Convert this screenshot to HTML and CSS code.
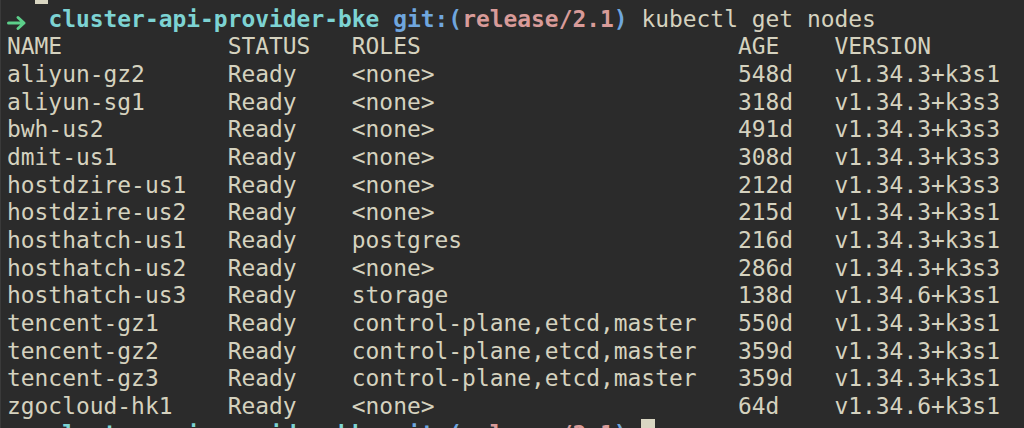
FILE: index.html
```html
<!DOCTYPE html>
<html lang="en">
<head>
<meta charset="utf-8">
<title>Terminal</title>
<link rel="stylesheet" href="styles.css">
</head>
<body>
<div class="term">
<div class="line">  <span class="cursor"> </span></div>
<div class="line"><span class="arrow"><svg viewBox="0 0 20 14" width="20" height="14"><path d="M1.5 7H17M11 1.5L17 7L11 12.5" fill="none" stroke="#5ccf8a" stroke-width="3" stroke-linecap="round" stroke-linejoin="round"/></svg></span>  <span class="dir">cluster-api-provider-bke</span> <span class="git">git:(</span><span class="branch">release/2.1</span><span class="git">)</span> kubectl get nodes</div>
<div class="line">NAME            STATUS   ROLES                       AGE    VERSION</div>
<div class="line">aliyun-gz2      Ready    &lt;none&gt;                      548d   v1.34.3+k3s1</div>
<div class="line">aliyun-sg1      Ready    &lt;none&gt;                      318d   v1.34.3+k3s3</div>
<div class="line">bwh-us2         Ready    &lt;none&gt;                      491d   v1.34.3+k3s3</div>
<div class="line">dmit-us1        Ready    &lt;none&gt;                      308d   v1.34.3+k3s3</div>
<div class="line">hostdzire-us1   Ready    &lt;none&gt;                      212d   v1.34.3+k3s3</div>
<div class="line">hostdzire-us2   Ready    &lt;none&gt;                      215d   v1.34.3+k3s1</div>
<div class="line">hosthatch-us1   Ready    postgres                    216d   v1.34.3+k3s1</div>
<div class="line">hosthatch-us2   Ready    &lt;none&gt;                      286d   v1.34.3+k3s3</div>
<div class="line">hosthatch-us3   Ready    storage                     138d   v1.34.6+k3s1</div>
<div class="line">tencent-gz1     Ready    control-plane,etcd,master   550d   v1.34.3+k3s1</div>
<div class="line">tencent-gz2     Ready    control-plane,etcd,master   359d   v1.34.3+k3s1</div>
<div class="line">tencent-gz3     Ready    control-plane,etcd,master   359d   v1.34.3+k3s1</div>
<div class="line">zgocloud-hk1    Ready    &lt;none&gt;                      64d    v1.34.6+k3s1</div>
<div class="line"><span class="arrow"><svg viewBox="0 0 20 14" width="20" height="14"><path d="M1.5 7H17M11 1.5L17 7L11 12.5" fill="none" stroke="#5ccf8a" stroke-width="3" stroke-linecap="round" stroke-linejoin="round"/></svg></span>  <span class="dir">cluster-api-provider-bke</span> <span class="git">git:(</span><span class="branch">release/2.1</span><span class="git">)</span> <span class="cursor"> </span></div>
</div>
</body>
</html>
```

FILE: styles.css
```css
html, body {
  margin: 0;
  padding: 0;
  height: 428px;
  overflow: hidden;
  background: #2b2b2b;
}

body {
  border-left: 1px solid #3a3a3a;
  box-sizing: border-box;
}

.term {
  margin: -22.2px 0 0 6px;
  font-family: "DejaVu Sans Mono", "Liberation Mono", monospace;
  font-size: 22.92px;
  line-height: 27.7px;
  color: #d5d2bf;
}

.line {
  white-space: pre;
  height: 27.7px;
}

.arrow {
  display: inline-block;
  width: 1ch;
  height: 27.7px;
  vertical-align: top;
  overflow: visible;
}

.arrow svg {
  display: block;
  margin-top: 10px;
  overflow: visible;
}

.dir {
  color: #7dd3d3;
  font-weight: bold;
}

.git {
  color: #6fa6de;
  font-weight: bold;
}

.branch {
  color: #d89b99;
  font-weight: bold;
}

.cursor {
  display: inline-block;
  width: 1ch;
  height: 27.7px;
  margin-top: -2px;
  vertical-align: top;
  background: #d9d6c2;
}
```
